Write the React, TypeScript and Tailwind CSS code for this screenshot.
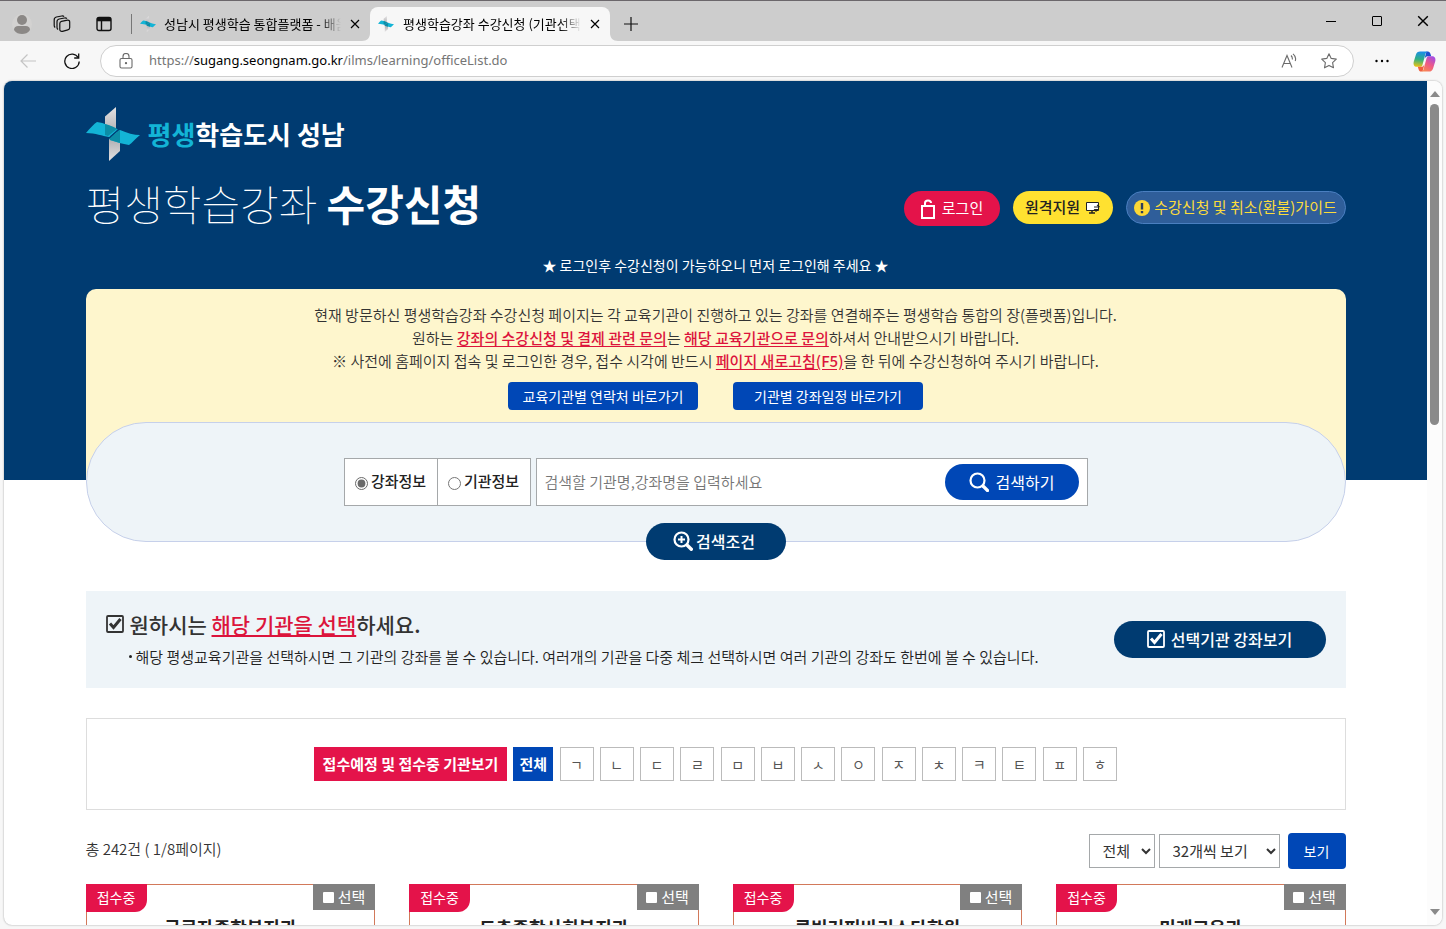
import React, { useState, type FC, type ReactNode } from 'react';

const CONSONANTS = ['ㄱ', 'ㄴ', 'ㄷ', 'ㄹ', 'ㅁ', 'ㅂ', 'ㅅ', 'ㅇ', 'ㅈ', 'ㅊ', 'ㅋ', 'ㅌ', 'ㅍ', 'ㅎ'];

const OFFICES = ['근로자종합복지관', '도촌종합사회복지관', '루빈커피바리스타학원', '미래교육관'];

/* 바람개비 모양 로고 */
const Pinwheel: FC<{ className: string }> = ({ className }) => (
  <svg viewBox="0 0 54 54" className={className} aria-hidden="true">
    <defs>
      <linearGradient id="wingTop" x1="0" y1="0" x2="0" y2="1">
        <stop offset="0" stopColor="#e4e2e3" />
        <stop offset="1" stopColor="#b4b3b6" />
      </linearGradient>
      <linearGradient id="wingBottom" x1="0" y1="0" x2="0" y2="1">
        <stop offset="0" stopColor="#a9a9ad" />
        <stop offset="1" stopColor="#e4e2e3" />
      </linearGradient>
    </defs>
    <path d="M19 9.500 L30 0 V24 H19 Z" fill="url(#wingTop)" />
    <path d="M23 29 L34 31 V44 L23 54 Z" fill="url(#wingBottom)" />
    <path d="M0 26 C4 21 8 17 11 15 C18 16 25 19 33 23 L23 30 C16 29 10 26 0 26 Z" fill="#13b4d6" />
    <path d="M19 17 C24 18 28 20 31 22 L22 29 L19 28 Z" fill="#0c8da6" />
    <path d="M34 23 C41 26 48 28 54 28 C49 32 46 36 43 38 C36 37 31 35 24 33 L23 30 Z" fill="#13b4d6" />
    <path d="M34 23 V36 L24 33 L23 31 Z" fill="#0c8da6" />
    <path d="M33 22 L22 32" stroke="#003b71" strokeWidth="1.2" />
  </svg>
);

const CheckSquare: FC<{ className: string }> = ({ className }) => (
  <svg viewBox="0 0 18 18" className={className} fill="none" stroke="currentColor" aria-hidden="true">
    <rect x="1" y="1" width="16" height="16" rx="1" strokeWidth="1.8" />
    <path d="M4 8.500 L7.500 12.500 L14.500 4" strokeWidth="3" />
  </svg>
);

const CloseIcon: FC<{ className: string }> = ({ className }) => (
  <svg viewBox="0 0 10 10" className={className} fill="none" stroke="currentColor" strokeWidth="1.2" aria-hidden="true">
    <path d="M1 1 L9 9 M9 1 L1 9" />
  </svg>
);

const TabTitle: FC<{ children: ReactNode }> = ({ children }) => (
  <span className="min-w-0 flex-1 overflow-hidden whitespace-nowrap text-[13px] text-black [mask-image:linear-gradient(to_right,black_88%,transparent)]">
    {children}
  </span>
);

const TitleBar: FC = () => (
  <div className="flex h-[41px] shrink-0 items-end border-t border-[#6b676b] bg-[#cdcdcd] text-black">
    <div className="flex h-[34px] items-center">
      <button aria-label="프로필" className="ml-3 flex h-5 w-5 items-center justify-center rounded-full bg-[#d3d2d1]">
        <svg viewBox="0 0 20 20" className="h-5 w-5" fill="#8b8886">
          <circle cx="10" cy="6" r="5" />
          <path d="M2 16 C2 13 4 12 6 12 H14 C16 12 18 13 18 16 C16 19 13 20 10 20 C7 20 4 19 2 16 Z" />
        </svg>
      </button>
      <button aria-label="작업 영역" className="ml-[21px]">
        <svg viewBox="0 0 18 18" className="h-[18px] w-[18px]" fill="none" stroke="#111" strokeWidth="1.2">
          <path d="M8.500 6.300 L14.500 5.200 C15.800 5 16.700 5.700 16.700 7 V12.500 C16.700 13.700 16 14.600 14.800 14.900 L9.500 16.300 C8 16.700 6.800 16 6.800 14.500 V8.500 C6.800 7.300 7.300 6.500 8.500 6.300 Z" />
          <path d="M5 14.500 C4.300 14 4 13.500 4 12.500 V6.800 C4 5.300 4.800 4.300 6.200 4 L11.500 3 C12.700 2.800 13.400 3.100 13.900 3.700" />
          <path d="M2.200 12.500 C1.500 12 1.200 11.500 1.200 10.500 V4.800 C1.200 3.300 2 2.300 3.400 2 L8.700 1 C9.900 0.800 10.600 1.100 11.100 1.700" />
        </svg>
      </button>
      <button aria-label="탭 작업 메뉴" className="ml-[25px]">
        <svg viewBox="0 0 16 16" className="h-4 w-4" fill="none" stroke="#111" strokeWidth="1.4">
          <rect x="1" y="1.500" width="14" height="13" rx="2" />
          <path d="M1 3.500 H15" strokeWidth="3.600" />
          <path d="M5.500 5 V14" />
        </svg>
      </button>
      <span className="ml-[19px] h-5 w-px bg-[#777]" />
    </div>
    <div className="flex h-[34px] w-[238px] items-center pl-2 pr-[10px]">
      <Pinwheel className="mr-2 h-4 w-4" />
      <TabTitle>성남시 평생학습 통합플랫폼 - 배움숲</TabTitle>
      <button aria-label="탭 닫기" className="ml-[9px]">
        <CloseIcon className="h-[10px] w-[10px]" />
      </button>
    </div>
    <div className="relative flex h-[34px] w-[240px] items-center rounded-t-lg bg-[#f7f7f7] pl-2 pr-[10px]">
      <svg viewBox="0 0 8 8" className="absolute -left-2 bottom-0 h-2 w-2" fill="#f7f7f7">
        <path d="M8 0 V8 H0 C5 8 8 5 8 0 Z" />
      </svg>
      <svg viewBox="0 0 8 8" className="absolute -right-2 bottom-0 h-2 w-2" fill="#f7f7f7">
        <path d="M0 0 V8 H8 C3 8 0 5 0 0 Z" />
      </svg>
      <Pinwheel className="mr-[9px] h-4 w-4" />
      <TabTitle>평생학습강좌 수강신청 (기관선택)</TabTitle>
      <button aria-label="탭 닫기" className="ml-[9px]">
        <CloseIcon className="h-[10px] w-[10px]" />
      </button>
    </div>
    <button aria-label="새 탭" className="ml-[14px] flex h-[34px] items-center">
      <svg viewBox="0 0 14 14" className="h-[14px] w-[14px]" stroke="#111" strokeWidth="1.2">
        <path d="M7 0 V14 M0 7 H14" />
      </svg>
    </button>
    <div className="ml-auto flex h-full items-center">
      <button aria-label="최소화" className="flex h-full w-[46px] items-center justify-center">
        <span className="h-px w-[10px] bg-black" />
      </button>
      <button aria-label="최대화" className="flex h-full w-[46px] items-center justify-center">
        <span className="h-[10px] w-[10px] rounded-[1px] border border-black" />
      </button>
      <button aria-label="닫기" className="flex h-full w-[46px] items-center justify-center">
        <CloseIcon className="h-3 w-3" />
      </button>
    </div>
  </div>
);

const CopilotIcon: FC = () => (
  <svg viewBox="0 0 24 24" className="h-[23px] w-[23px]" aria-hidden="true">
    <defs>
      <linearGradient id="copLeft" x1="0.3" y1="0" x2="0.2" y2="1">
        <stop offset="0" stopColor="#1a8ee8" />
        <stop offset="0.5" stopColor="#2fb083" />
        <stop offset="1" stopColor="#f2c40f" />
      </linearGradient>
      <linearGradient id="copRight" x1="0.8" y1="0" x2="0.2" y2="1">
        <stop offset="0" stopColor="#a14be6" />
        <stop offset="0.5" stopColor="#ef5a86" />
        <stop offset="1" stopColor="#f9894f" />
      </linearGradient>
    </defs>
    <path d="M14 1.500 H15.500 C17 1.500 17.700 2.500 18.200 4 L19 6.500 H15.500 C13.500 6.500 12.500 8 12 9.500 Z" fill="#1b50cf" />
    <path d="M7.500 1.500 H15.500 C14 1.500 13.300 2.800 12.700 5 L10 15 C9.500 17 8.500 17.500 7 17.500 H4 C1 17.500 0.200 15 0.700 12.500 L3 5 C3.800 2.500 5 1.500 7.500 1.500 Z" fill="url(#copLeft)" />
    <path d="M10 22.500 H8.500 C7 22.500 6.300 21.500 5.800 20 L5 17.500 H8.500 C10.500 17.500 11.500 16 12 14.500 Z" fill="#f0603f" />
    <path d="M16.500 22.500 H8.500 C10 22.500 10.700 21.200 11.300 19 L14 9 C14.500 7 15.500 6.500 17 6.500 H20 C23 6.500 23.800 9 23.300 11.500 L21 19 C20.200 21.500 19 22.500 16.500 22.500 Z" fill="url(#copRight)" />
  </svg>
);

const AddressBar: FC = () => (
  <div className="flex h-10 shrink-0 items-center bg-[#f7f7f7] pl-5 pr-[10px] text-[#6b6b6b]">
    <button aria-label="뒤로" className="text-[#c4c4c4]">
      <svg viewBox="0 0 16 16" className="h-4 w-4" fill="none" stroke="currentColor" strokeWidth="1.2">
        <path d="M16 8 H1 M7.500 1.500 L1 8 L7.500 14.500" />
      </svg>
    </button>
    <button aria-label="새로 고침" className="ml-7 text-[#111]">
      <svg viewBox="0 0 16 16" className="h-4 w-4" fill="none" stroke="currentColor" strokeWidth="1.300">
        <path d="M14.300 4.800 A7.200 7.200 0 1 0 15.200 8.500" />
        <path d="M14.700 0.500 V5 H10.200" />
      </svg>
    </button>
    <div className="ml-5 flex h-8 flex-1 items-center rounded-full border border-[#cfcfcf] bg-white pl-[18px] pr-4">
      <svg viewBox="0 0 14 16" className="h-4 w-[14px] shrink-0" fill="none" stroke="currentColor" strokeWidth="1.1">
        <rect x="1" y="5.500" width="12" height="9.500" rx="1.500" />
        <path d="M4 5.500 V3.500 A3 3 0 0 1 10 3.500 V5.500" />
        <circle cx="7" cy="10.200" r="0.600" fill="currentColor" />
      </svg>
      <p className="ml-4 flex-1 text-[13px] text-[#757575] [font-family:'Noto_Sans','Noto_Sans_CJK_KR',sans-serif]">
        https://<span className="text-black">sugang.seongnam.go.kr</span>/ilms/learning/officeList.do
      </p>
      <button aria-label="소리내어 읽기">
        <svg viewBox="0 0 16 16" className="h-4 w-4" fill="none" stroke="currentColor" strokeWidth="1.1">
          <path d="M1 14.500 L6 2.500 L11 14.500 M2.800 10.500 H9.200" />
          <path d="M10 2.500 C11.200 3.700 11.600 5 11.200 6.500 M12 0.800 C14.400 2.800 15.200 5.300 14.200 8" />
        </svg>
      </button>
      <button aria-label="즐겨찾기에 추가" className="ml-6">
        <svg viewBox="0 0 16 16" className="h-4 w-4" fill="none" stroke="currentColor" strokeWidth="1.1" strokeLinejoin="round">
          <path d="M8 0.800 L10.200 5.400 L15.300 6.100 L11.600 9.700 L12.500 14.800 L8 12.400 L3.500 14.800 L4.400 9.700 L0.700 6.100 L5.800 5.400 Z" />
        </svg>
      </button>
    </div>
    <button aria-label="설정 및 기타" className="ml-[21px] text-black">
      <svg viewBox="0 0 14 4" className="h-1 w-[14px]" fill="currentColor">
        <circle cx="1.500" cy="2" r="1.200" />
        <circle cx="7" cy="2" r="1.200" />
        <circle cx="12.500" cy="2" r="1.200" />
      </svg>
    </button>
    <button aria-label="Copilot" className="ml-6">
      <CopilotIcon />
    </button>
  </div>
);

const Accent: FC<{ children: ReactNode }> = ({ children }) => (
  <span className="font-medium text-[#dc143c] underline underline-offset-2">{children}</span>
);

const PageHeader: FC = () => (
  <header className="bg-[#003b71] px-6 pt-[26px] text-white">
    <div className="mx-auto max-w-[1260px]">
      <a href="#home" className="flex items-center">
        <Pinwheel className="h-[54px] w-[54px]" />
        <span className="ml-2 text-[26px] font-bold leading-none">
          <span className="text-[#13b4d6]">평생</span>학습도시 성남
        </span>
      </a>
      <div className="mt-[17px] flex items-start">
        <h1 className="text-[42px] font-thin leading-[50px]">
          평생학습강좌 <strong className="font-bold">수강신청</strong>
        </h1>
        <div className="ml-auto flex items-start gap-[13px] pt-[13px] text-[15px]">
          <button className="flex h-[35px] w-24 items-center justify-center rounded-full bg-[#e4134a]">
            <svg viewBox="0 0 16 20" className="mr-[6px] h-5 w-4" fill="none" stroke="white" strokeWidth="2">
              <rect x="2" y="7" width="12" height="12" />
              <path d="M5 7 V4 C5 0.500 11 0.500 11 4" />
            </svg>
            로그인
          </button>
          <button className="flex h-[33px] w-[100px] items-center justify-center rounded-full bg-[#ffe130] font-medium text-[#222]">
            원격지원
            <svg viewBox="0 0 14 12" className="ml-[6px] h-3 w-[14px]">
              <path d="M0.500 0.500 H12.500 V8.500 H0.500 Z" fill="white" stroke="#222" />
              <path d="M3 11 H9 M6 8.500 V11" stroke="#222" strokeWidth="1.500" />
              <path d="M8 5 H13 M11 2.800 L13.500 5 M13 7.500 H8.500 M10.500 9.500 L8 7.500" stroke="#222" strokeWidth="1.100" />
            </svg>
          </button>
          <button className="flex h-[33px] w-[220px] items-center justify-center whitespace-nowrap rounded-full border border-[#4a7fc0] bg-[#2f5e9a] text-[#fbdc3c]">
            <svg viewBox="0 0 16 16" className="mr-1 h-4 w-4 shrink-0">
              <circle cx="8" cy="8" r="8" fill="#fdd835" />
              <path d="M8 3 V9.500 M8 11 V13.300" stroke="#2b3d5c" strokeWidth="2.400" />
            </svg>
            수강신청 및 취소(환불)가이드
          </button>
        </div>
      </div>
      <p className="mt-[27px] text-center text-sm">★ 로그인후 수강신청이 가능하오니 먼저 로그인해 주세요 ★</p>
      <div className="mt-[14px] rounded-t-[10px] bg-[#fef6cd] pb-[70px] pt-[14px] text-center text-[15px] leading-[23px] text-[#333]">
        <div className="font-[350]">
          <p>현재 방문하신 평생학습강좌 수강신청 페이지는 각 교육기관이 진행하고 있는 강좌를 연결해주는 평생학습 통합의 장(플랫폼)입니다.</p>
          <p>
            원하는 <Accent>강좌의 수강신청 및 결제 관련 문의</Accent>는 <Accent>해당 교육기관으로 문의</Accent>하셔서 안내받으시기 바랍니다.
          </p>
          <p>
            ※ 사전에 홈페이지 접속 및 로그인한 경우, 접수 시각에 반드시 <Accent>페이지 새로고침(F5)</Accent>을 한 뒤에 수강신청하여 주시기 바랍니다.
          </p>
        </div>
        <div className="mt-[10px] flex justify-center gap-[35px] text-sm text-white">
          <a href="#contact" className="flex h-7 w-[190px] items-center justify-center rounded bg-[#0047b6] pb-px">
            교육기관별 연락처 바로가기
          </a>
          <a href="#schedule" className="flex h-7 w-[190px] items-center justify-center rounded bg-[#0047b6] pb-px">
            기관별 강좌일정 바로가기
          </a>
        </div>
      </div>
    </div>
  </header>
);

const SearchForm: FC = () => {
  const [target, setTarget] = useState('lecture');
  const [keyword, setKeyword] = useState('');

  return (
    <form className="relative -mt-[58px]" onSubmit={(e) => e.preventDefault()}>
      <div className="flex h-[120px] justify-center gap-[5px] rounded-full border border-[#c6d0ea] bg-[#eef4f8] pt-[35px]">
        <div className="flex h-12 w-[187px] divide-x divide-[#a5a8aa] border border-[#a5a8aa] bg-white text-[15px] font-medium text-[#222]">
          <label className="flex flex-1 items-center justify-center gap-[3px] pb-0.5">
            <input
              type="radio"
              name="target"
              className="mt-[5px] h-[13px] w-[13px] accent-[#6b6b6b]"
              checked={target === 'lecture'}
              onChange={() => setTarget('lecture')}
            />
            강좌정보
          </label>
          <label className="flex flex-1 items-center justify-center gap-[3px] pb-0.5">
            <input
              type="radio"
              name="target"
              className="mt-[5px] h-[13px] w-[13px] accent-[#6b6b6b]"
              checked={target === 'office'}
              onChange={() => setTarget('office')}
            />
            기관정보
          </label>
        </div>
        <div className="flex h-12 w-[552px] items-center border border-[#a5a8aa] bg-white px-2">
          <input
            type="text"
            aria-label="검색어"
            className="h-full min-w-0 flex-1 pb-0.5 text-[15px] font-[350] text-[#222] outline-none placeholder:text-[#757575]"
            placeholder="검색할 기관명,강좌명을 입력하세요"
            value={keyword}
            onChange={(e) => setKeyword(e.target.value)}
          />
          <button type="submit" className="flex h-9 w-[134px] items-center justify-center rounded-full bg-[#0047b6] pb-px text-base text-white">
            <svg viewBox="0 0 20 20" className="mr-[7px] h-5 w-5" fill="none" stroke="currentColor">
              <circle cx="8.500" cy="8.500" r="7" strokeWidth="2.200" />
              <path d="M14 14 L18.500 18.500" strokeWidth="3.200" strokeLinecap="round" />
            </svg>
            검색하기
          </button>
        </div>
      </div>
      <div className="-mt-[19px] flex justify-center">
        <button type="button" className="flex h-[37px] w-[140px] items-center justify-center rounded-full bg-[#003b71] pb-px pr-[3px] text-base font-medium text-white">
          <svg viewBox="0 0 20 20" className="mr-[3px] h-5 w-5" fill="none" stroke="currentColor">
            <circle cx="8.500" cy="8.500" r="7" strokeWidth="2.200" />
            <path d="M8.500 5 V12 M5 8.500 H12" strokeWidth="2" />
            <path d="M14 14 L18.300 18.300" strokeWidth="3.400" strokeLinecap="round" />
          </svg>
          검색조건
        </button>
      </div>
    </form>
  );
};

const OfficeCard: FC<{ name: string }> = ({ name }) => (
  <li className="h-[180px] border border-[#d2795a] bg-white">
    <div className="-mx-px -mt-px flex items-start justify-between text-white">
      <span className="flex h-7 w-[61px] items-center justify-center rounded-br-xl bg-[#e4134a] pb-[3px] text-sm">접수중</span>
      <label className="flex h-[26px] w-[62px] items-center justify-center gap-1 bg-[#808080] text-[15px]">
        <input type="checkbox" className="h-[11px] w-[11px] appearance-none rounded-[1px] bg-white" />
        선택
      </label>
    </div>
    <h3 className="text-center text-lg font-bold leading-[30px] text-[#222]">{name}</h3>
  </li>
);

const App: FC = () => {
  const [initial, setInitial] = useState('전체');

  return (
    <div className="flex h-screen flex-col overflow-hidden bg-[#f7f7f7] [font-family:'Noto_Sans_CJK_KR',sans-serif]">
      <TitleBar />
      <AddressBar />
      <div className="mx-1 mb-1 flex min-h-0 flex-1 overflow-hidden rounded-lg bg-white shadow-[0_0_2px_#999]">
        <div className="min-w-0 flex-1 overflow-hidden">
          <PageHeader />
          <main className="px-6 text-[#333]">
            <div className="mx-auto max-w-[1260px]">
              <SearchForm />

              <section className="mt-[31px] flex h-[97px] items-center justify-between bg-[#eef4f8] px-5">
                <div>
                  <h2 className="flex items-center text-[21px] font-medium leading-[34px]">
                    <CheckSquare className="mr-[6px] h-[18px] w-[18px]" />
                    <span>
                      원하시는 <span className="text-[#dc143c] underline decoration-2 underline-offset-2">해당 기관을 선택</span>하세요.
                    </span>
                  </h2>
                  <p className="flex items-center gap-1 pl-[23px] text-[15px] font-[350] leading-[32px] text-[#222]">
                    <span className="h-[3px] w-[3px] rounded-full bg-[#222]" />
                    해당 평생교육기관을 선택하시면 그 기관의 강좌를 볼 수 있습니다. 여러개의 기관을 다중 체크 선택하시면 여러 기관의 강좌도 한번에 볼 수 있습니다.
                  </p>
                </div>
                <button className="flex h-[37px] w-[212px] shrink-0 items-center justify-center rounded-full bg-[#003b71] pb-px text-base font-medium text-white">
                  <CheckSquare className="mr-[6px] h-[18px] w-[18px]" />
                  선택기관 강좌보기
                </button>
              </section>

              <nav className="mt-[30px] flex h-[92px] items-center justify-center border border-[#ddd]">
                <div className="flex w-[803px] justify-between">
                  <button className="h-[34px] w-[193px] bg-[#e4134a] text-[15px] font-bold text-white">접수예정 및 접수중 기관보기</button>
                  <button className="h-[34px] w-10 bg-[#0047b6] text-[15px] font-bold text-white" onClick={() => setInitial('전체')}>
                    전체
                  </button>
                  {CONSONANTS.map((letter) => (
                    <button
                      key={letter}
                      aria-pressed={initial === letter}
                      className="h-[34px] w-[34px] border border-[#bbb] text-sm text-[#555]"
                      onClick={() => setInitial(letter)}
                    >
                      {letter}
                    </button>
                  ))}
                </div>
              </nav>

              <div className="mt-[23px] flex items-center">
                <p className="flex-1 pb-1 text-[15px] font-[350]">총 242건 ( 1/8페이지)</p>
                <select aria-label="접수 상태" className="h-[34px] w-[66px] border border-[#a5a8aa] bg-white pb-0.5 pl-[9px] text-[15px]">
                  <option>전체</option>
                  <option>접수중</option>
                </select>
                <select aria-label="페이지당 개수" className="ml-1 h-[34px] w-[121px] border border-[#a5a8aa] bg-white pb-0.5 pl-[9px] text-[15px]">
                  <option>32개씩 보기</option>
                  <option>64개씩 보기</option>
                </select>
                <button className="ml-2 h-9 w-[58px] rounded bg-[#0047b6] text-sm text-white">보기</button>
              </div>

              <ul className="mt-[15px] grid grid-cols-4 gap-x-[34px]">
                {OFFICES.map((name) => (
                  <OfficeCard key={name} name={name} />
                ))}
              </ul>
            </div>
          </main>
        </div>
        {/* 스크롤바 */}
        <div className="flex w-[15px] shrink-0 flex-col items-center bg-[#fcfcfc] pb-[10px] pt-[10px]">
          <svg viewBox="0 0 10 6" className="h-[6px] w-[10px]" fill="#8a8a8a">
            <path d="M5 0 L10 6 H0 Z" />
          </svg>
          <div className="mt-[7px] h-[39%] w-[9px] rounded-full bg-[#8a8a8a]" />
          <svg viewBox="0 0 10 6" className="mt-auto h-[6px] w-[10px]" fill="#8a8a8a">
            <path d="M5 6 L10 0 H0 Z" />
          </svg>
        </div>
      </div>
    </div>
  );
};

export default App;
